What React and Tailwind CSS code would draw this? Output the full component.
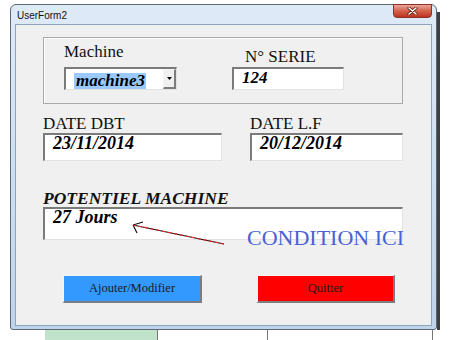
import React from 'react';

const sunken = 'bg-white border-t-2 border-l-2 border-b border-r border-t-[#7b7b7b] border-l-[#7b7b7b] border-b-[#e2e2e2] border-r-[#e2e2e2]';
const raised = 'border-t border-l border-b-2 border-r-2 border-t-[#f4f4f4] border-l-[#f4f4f4] border-b-[#7d7d7d] border-r-[#7d7d7d]';

const App = () => {
  return (
    <div className="relative w-[454px] h-[340px] overflow-hidden bg-white font-['Liberation_Serif',serif]">
      {/* window */}
      <div className="flex pt-[4px] pl-[10px]">
        <div className="flex flex-col w-[427px] h-[326px] rounded-t-[6px] rounded-b-[3px] border border-[#5d6876] bg-gradient-to-b from-[#dfeaf7] via-[#cddff2] to-[#bfd3eb]">
          {/* title bar */}
          <div className="relative h-[19px]">
            <span className="absolute left-[6px] top-[6px] text-[10px] leading-none text-[#111] font-['Liberation_Sans',sans-serif]">
              UserForm2
            </span>
            <div className="absolute right-[4px] top-[-1px] flex items-center justify-center w-[39px] h-[14px] rounded-b-[4px] border border-[#8a3024] bg-gradient-to-b from-[#e9a699] via-[#d2604c] to-[#c0321f]">
              <svg width="11" height="8" viewBox="0 0 11 8">
                <path d="M2 1 L9 7 M9 1 L2 7" stroke="#5a1a10" strokeWidth="3" strokeLinecap="round" />
                <path d="M2 1 L9 7 M9 1 L2 7" stroke="#ffffff" strokeWidth="1.6" strokeLinecap="round" />
              </svg>
            </div>
          </div>

          {/* client area */}
          <div className="relative ml-[4px] w-[417px] h-[302px] border border-[#8ea3bc] bg-[#f0f0f0]">
            {/* frame */}
            <div className="flex ml-[27px] mt-[12px] w-[360px] h-[67px] border border-[#a9a9a9] shadow-[inset_1px_1px_0_#ffffff]">
              <div className="flex flex-col ml-[20px]">
                <div className="mt-[5px] h-[17px] text-[17px] leading-[17px] text-[#111]">Machine</div>
                <div className={`flex mt-[7px] w-[113px] h-[23px] ${sunken}`}>
                  <div className="flex-1">
                    <span className="inline-block ml-[8px] mt-[1px] pl-[2px] pr-[1px] h-[16px] text-[17px] leading-[16px] font-bold italic text-black bg-[#99c9ff]">
                      machine3
                    </span>
                  </div>
                  <div className={`flex items-center justify-center w-[13px] h-full bg-[#f0f0f0] ${raised}`}>
                    <svg width="5" height="3" viewBox="0 0 5 3">
                      <path d="M0 0 H5 L2.5 3 Z" fill="#000" />
                    </svg>
                  </div>
                </div>
              </div>
              <div className="flex flex-col ml-[55px]">
                <div className="ml-[13px] mt-[10px] h-[17px] text-[17px] leading-[17px] text-[#111]">N° SERIE</div>
                <div className={`mt-[2px] w-[112px] h-[23px] ${sunken}`}>
                  <div className="ml-[8px] mt-[1px] h-[16px] text-[17px] leading-[16px] font-bold italic text-black">124</div>
                </div>
              </div>
            </div>

            {/* dates */}
            <div className="flex ml-[27px] mt-[11px]">
              <div className="flex flex-col w-[179px]">
                <div className="h-[17px] text-[17px] leading-[17px] text-[#111]">DATE DBT</div>
                <div className={`mt-[1px] h-[28px] ${sunken}`}>
                  <div className="pl-[8px] text-[18px] leading-[16px] font-bold italic text-black">23/11/2014</div>
                </div>
              </div>
              <div className="flex flex-col ml-[28px] w-[153px]">
                <div className="h-[17px] text-[17px] leading-[17px] text-[#111]">DATE L.F</div>
                <div className={`mt-[1px] h-[28px] ${sunken}`}>
                  <div className="pl-[8px] text-[18px] leading-[16px] font-bold italic text-black">20/12/2014</div>
                </div>
              </div>
            </div>

            {/* potentiel */}
            <div className="flex flex-col ml-[27px] mt-[29px] w-[360px]">
              <div className="h-[17px] text-[17.5px] leading-[17px] font-bold italic text-[#111]">POTENTIEL MACHINE</div>
              <div className={`h-[33px] ${sunken}`}>
                <div className="pl-[8px] text-[18px] leading-[16px] font-bold italic text-black">27 Jours</div>
              </div>
            </div>

            {/* buttons */}
            <div className="flex ml-[47px] mt-[35px]">
              <button className={`w-[139px] h-[28px] bg-[#3399ff] text-[12.5px] leading-none text-[#1a1a1a] ${raised}`}>
                Ajouter/Modifier
              </button>
              <button className={`ml-[55px] w-[138px] h-[28px] bg-[#ff0000] text-[12.5px] leading-none text-[#1a1a1a] ${raised}`}>
                Quitter
              </button>
            </div>
          </div>
        </div>
        <div className="mt-[8px] w-[3px] h-[318px] bg-[#3f3f3f]" />
      </div>

      {/* sheet behind the window */}
      <div className="flex ml-[45px] h-[10px]">
        <div className="w-[113px] h-full bg-[#c2e3cb] border-r border-[#777]" />
        <div className="w-[110px] h-full border-r border-[#777]" />
        <div className="w-[165px] h-full border-r border-[#777]" />
      </div>

      {/* annotation */}
      <span className="absolute left-[247px] top-[227px] text-[22px] leading-[22px] text-[#4b5fd6] whitespace-nowrap">
        CONDITION ICI
      </span>
      <svg className="absolute left-0 top-0 pointer-events-none" width="454" height="340" viewBox="0 0 454 340">
        <path d="M224 244 L133 225 M133 225 L143 222 M133 225 L137 233" stroke="#111" strokeWidth="1.2" fill="none" />
        <path d="M224 244 L133 225" stroke="#ff2020" strokeWidth="1.2" strokeDasharray="3 3" fill="none" />
      </svg>
    </div>
  );
};

export default App;
